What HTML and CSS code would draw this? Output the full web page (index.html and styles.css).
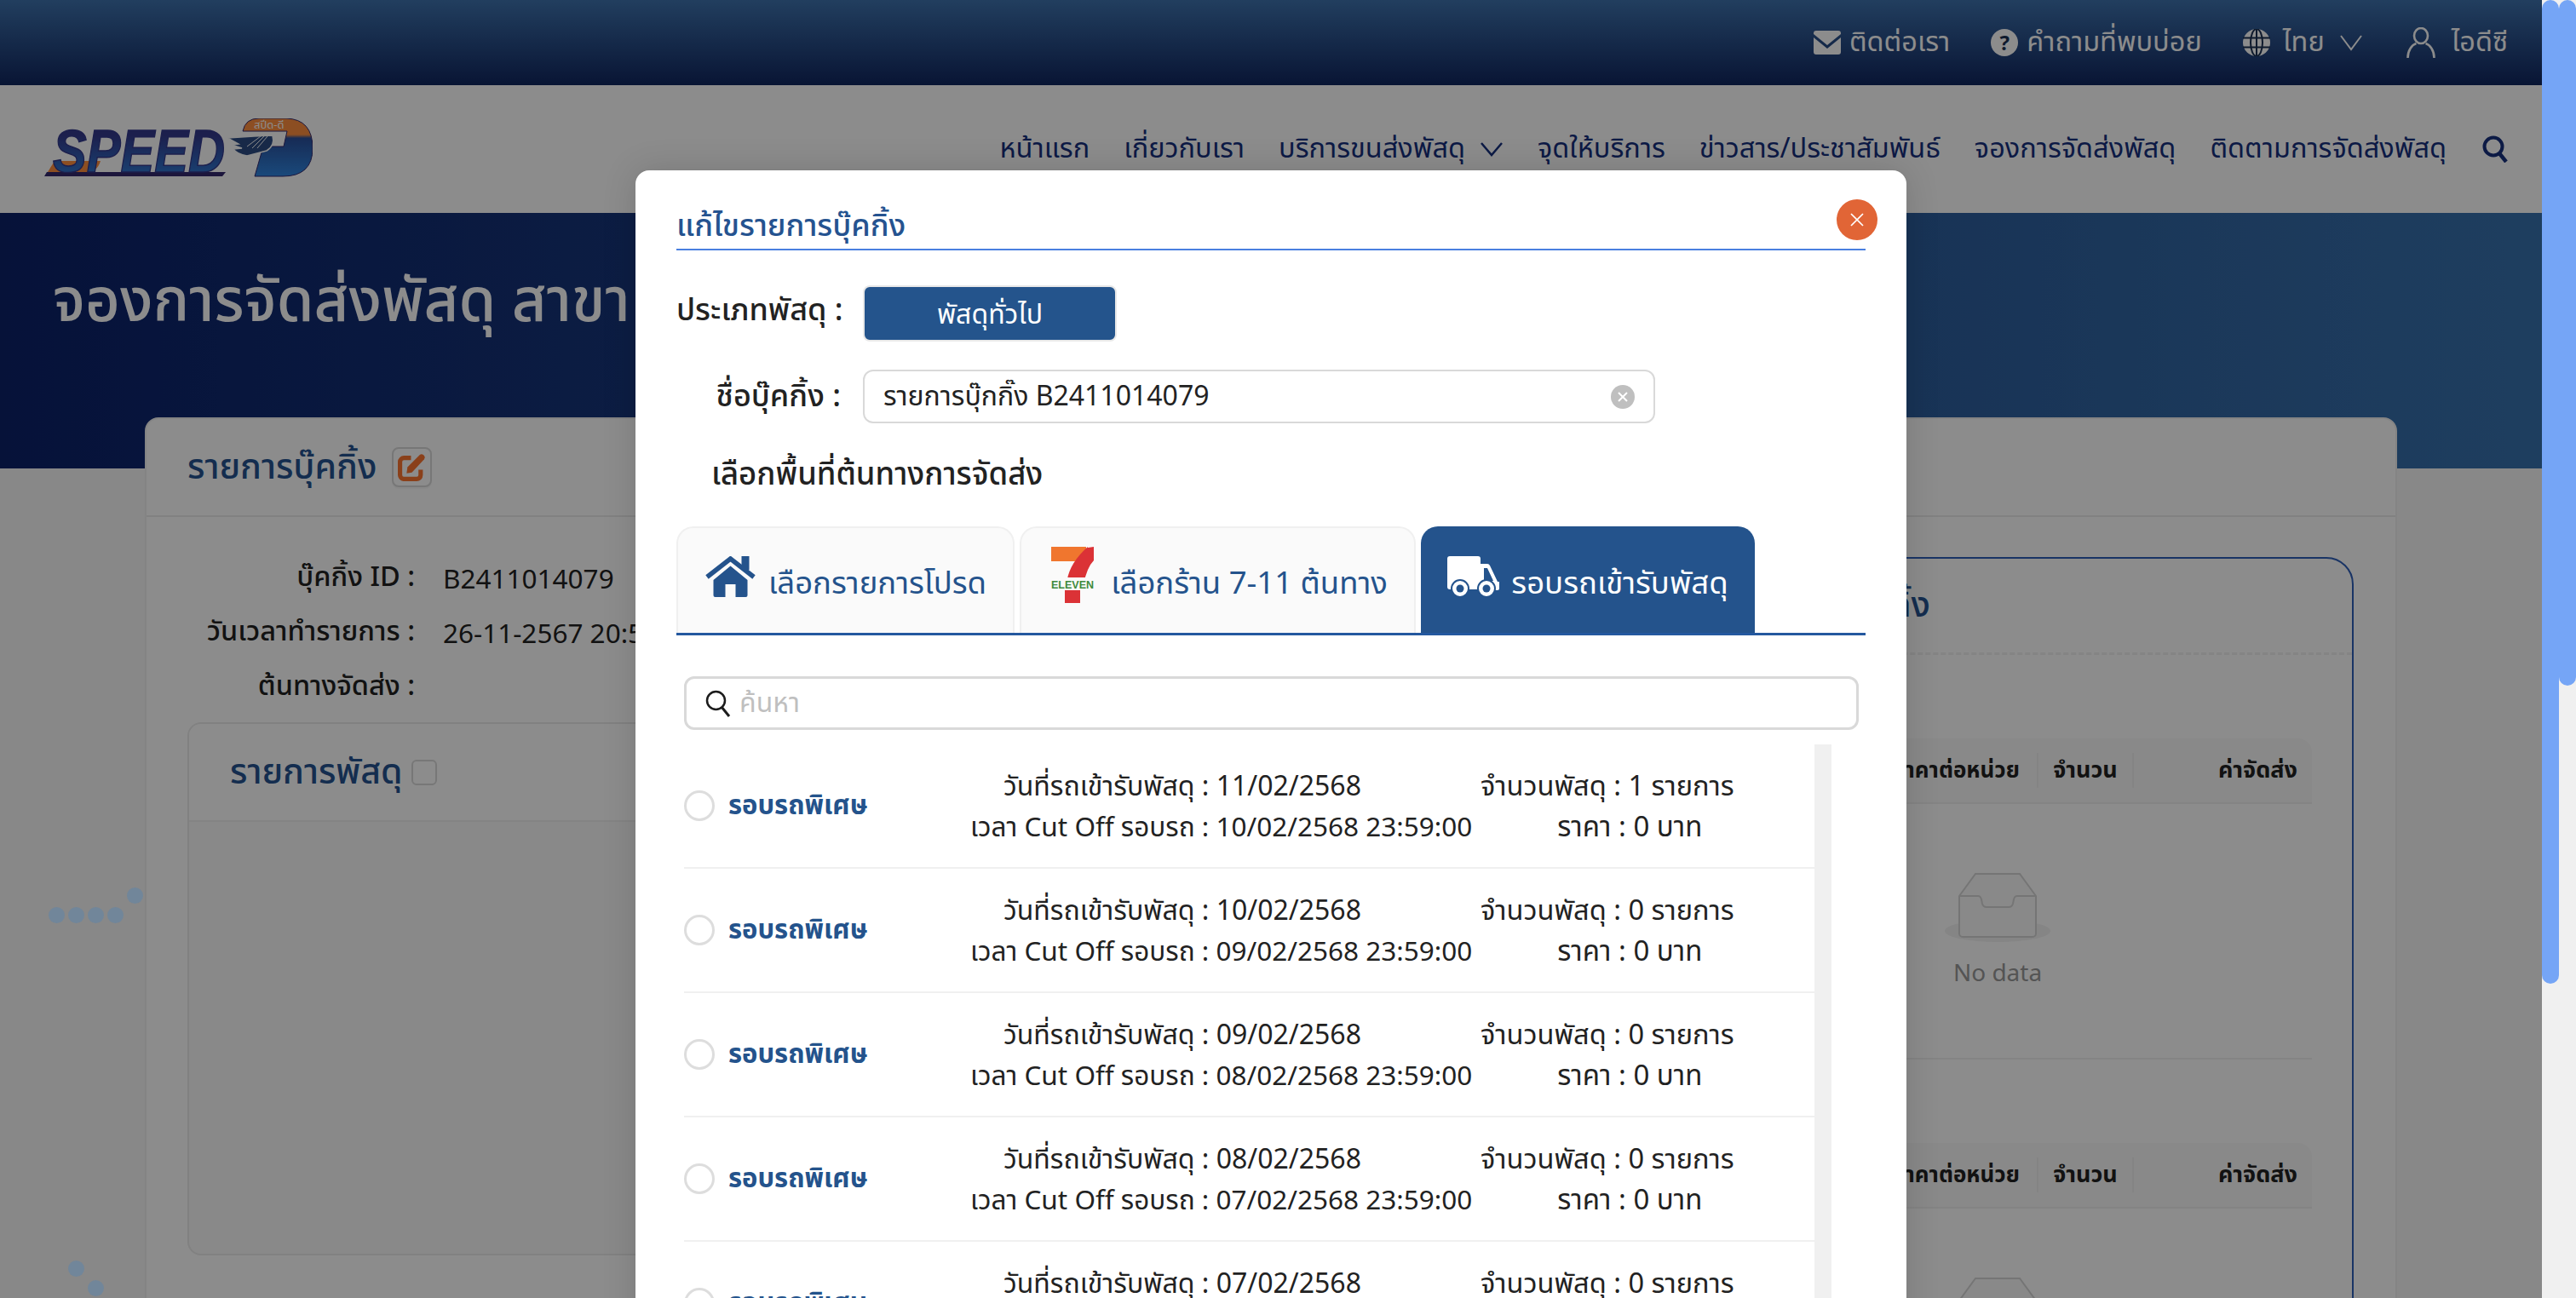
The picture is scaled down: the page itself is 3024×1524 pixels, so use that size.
FILE: index.html
```html
<!DOCTYPE html>
<html lang="th">
<head>
  <meta charset="UTF-8">
  <meta name="viewport" content="width=device-width, initial-scale=1.0">
  <title>จองการจัดส่งพัสดุ</title>
  <link rel="stylesheet" href="styles.css">
</head>
<body>
<div class="viewport">

  <!-- top bar -->
  <div class="topbar">
    <a class="top-link">
      <svg class="top-icon" viewBox="0 0 32 28"><path fill="currentColor" d="M3 0h26a3 3 0 0 1 3 3v1L16 17 0 4V3a3 3 0 0 1 3-3zM0 8l16 13L32 8v17a3 3 0 0 1-3 3H3a3 3 0 0 1-3-3z"/></svg>
      ติดต่อเรา
    </a>
    <a class="top-link">
      <span class="help-dot">?</span>
      คำถามที่พบบ่อย
    </a>
    <a class="top-link top-lang">
      <svg class="top-icon" viewBox="0 0 32 32"><circle cx="16" cy="16" r="16" fill="currentColor"/><g fill="none" stroke="#1a3052" stroke-width="2"><ellipse cx="16" cy="16" rx="7" ry="16"/><path d="M0 10.5h32M0 21.5h32M16 0v32"/></g></svg>
      ไทย
      <svg class="top-chev" viewBox="0 0 28 20"><path d="M2 2l12 16L26 2" fill="none" stroke="currentColor" stroke-width="2"/></svg>
    </a>
    <a class="top-link top-user">
      <svg class="user-icon" viewBox="0 0 34 36"><g fill="none" stroke="currentColor" stroke-width="2.6"><ellipse cx="17" cy="10" rx="8" ry="9"/><path d="M1.5 36c0-9 5-15.500 10-17M32.500 36c0-9-5-15.500-10-17"/></g></svg>
      ไอดีซี
    </a>
  </div>

  <!-- main menu -->
  <div class="navbar">
    <svg class="logo" viewBox="51 137 316 69">
      <defs>
        <linearGradient id="logoBlue" x1="0" y1="0" x2="0" y2="1">
          <stop offset="0.25" stop-color="#33398c"/>
          <stop offset="1" stop-color="#2f86e0"/>
        </linearGradient>
        <linearGradient id="logoD" x1="0" y1="0" x2="0" y2="1">
          <stop offset="0.28" stop-color="#ff8f3e"/>
          <stop offset="0.34" stop-color="#2a4f9c"/>
          <stop offset="1" stop-color="#2f86e0"/>
        </linearGradient>
      </defs>
      <path d="M52 205l3-5h210l-4 5z" fill="#33296e"/>
      <path d="M56 200l8-13h54q-4 13-16 13z" fill="#ff8f3e"/>
      <text class="logo-word" x="62" y="200" textLength="202" lengthAdjust="spacingAndGlyphs" fill="url(#logoBlue)">SPEED</text>
      <path d="M285 152q3-15 19-15h32q31 1 31 35 0 33-35 33h-33l10-35h24l4-18z" fill="url(#logoD)" stroke="#33296e" stroke-width="1"/>
      <text class="logo-thai" x="298" y="149">สปีด-ดี</text>
      <path d="M267 160l31-2 22-1q3 12-7 18l-23 6q-12-2-16-8l10-1-12-4 8-1z" fill="#2c4b84" stroke="#fff" stroke-width="1.500"/>
      <path d="M290 170l16-12M296 172l14-14M302 172l12-14" stroke="#fff" fill="none"/>
    </svg>
    <nav class="menu">
      <a>หน้าแรก</a>
      <a>เกี่ยวกับเรา</a>
      <a class="menu-drop">บริการขนส่งพัสดุ
        <svg class="menu-chev" viewBox="0 0 28 20"><path d="M2 3l12 14L26 3" fill="none" stroke="currentColor" stroke-width="2.500"/></svg>
      </a>
      <a>จุดให้บริการ</a>
      <a>ข่าวสาร/ประชาสัมพันธ์</a>
      <a>จองการจัดส่งพัสดุ</a>
      <a>ติดตามการจัดส่งพัสดุ</a>
      <svg class="menu-search" viewBox="0 0 30 32"><circle cx="13" cy="13" r="10.500" fill="none" stroke="currentColor" stroke-width="4"/><path d="M20 21l8 10" stroke="currentColor" stroke-width="4.500"/></svg>
    </nav>
  </div>

  <div class="hero">
    <h1>จองการจัดส่งพัสดุ สาขาเซ็นทรัล</h1>
  </div>

  <!-- booking panel, mostly behind the modal -->
  <div class="panel">
    <div class="panel-head">
      <span class="panel-title">รายการบุ๊คกิ้ง</span>
      <span class="edit-btn">
        <svg viewBox="0 0 32 32"><path d="M26 19v6a4.500 4.500 0 0 1-4.500 4.500h-15A4.500 4.500 0 0 1 2.500 25V10a4.500 4.500 0 0 1 4.500-4.500h8" fill="none" stroke="#fb7530" stroke-width="5"/><path d="M10 23l1-7L25 2a3 3 0 0 1 4 0l1 1a3 3 0 0 1 0 4L16 22z" fill="#fb7530"/></svg>
      </span>
    </div>
    <div class="panel-body">
      <div class="left-col">
        <div class="info-row"><span class="info-label">บุ๊คกิ้ง ID :</span><span class="info-value">B2411014079</span></div>
        <div class="info-row"><span class="info-label">วันเวลาทำรายการ :</span><span class="info-value">26-11-2567 20:59:14</span></div>
        <div class="info-row"><span class="info-label">ต้นทางจัดส่ง :</span><span class="info-value"></span></div>
        <div class="parcel-card">
          <div class="parcel-head">รายการพัสดุ <span class="check"></span></div>
        </div>
      </div>
      <div class="right-card">
        <div class="right-head">รายการบุ๊คกิ้ง</div>
        <div class="table-head">
          <span class="th-name">ชื่อรายการ</span>
          <span class="th-unit">ราคาต่อหน่วย</span>
          <span class="th-qty">จำนวน</span>
          <span class="th-fee">ค่าจัดส่ง</span>
        </div>
        <div class="empty">
          <svg class="empty-icon" viewBox="0 0 128 82"><ellipse cx="64" cy="68" rx="62" ry="13" fill="#f2f2f2"/><path d="M19 27L38 1h52l19 26v44a4 4 0 0 1-4 4H23a4 4 0 0 1-4-4z" fill="#fafafa" stroke="#d6d6d6" stroke-width="2"/><path d="M19 27h22q3 0 4 4l1 5q1 4 5 4h26q4 0 5-4l1-5q1-4 4-4h22" fill="none" stroke="#d6d6d6" stroke-width="2"/></svg>
          <div class="empty-text">No data</div>
        </div>
        <div class="table-head table-head-2">
          <span class="th-name">ชื่อรายการ</span>
          <span class="th-unit">ราคาต่อหน่วย</span>
          <span class="th-qty">จำนวน</span>
          <span class="th-fee">ค่าจัดส่ง</span>
        </div>
        <div class="empty">
          <svg class="empty-icon" viewBox="0 0 128 82"><ellipse cx="64" cy="68" rx="62" ry="13" fill="#f2f2f2"/><path d="M19 27L38 1h52l19 26v44a4 4 0 0 1-4 4H23a4 4 0 0 1-4-4z" fill="#fafafa" stroke="#d6d6d6" stroke-width="2"/></svg>
        </div>
      </div>
    </div>
  </div>

  <div class="overlay"></div>

  <span class="dot dot-a"></span>
  <span class="dot dot-b"></span>
  <span class="dot dot-c"></span>
  <span class="dot dot-d"></span>
  <span class="dot dot-e"></span>
  <span class="dot dot-f"></span>
  <span class="dot dot-g"></span>

  <!-- edit booking modal -->
  <div class="modal">
    <div class="modal-title">แก้ไขรายการบุ๊คกิ้ง</div>
    <button class="close-btn">
      <svg viewBox="0 0 20 20"><path d="M3 3l14 14M17 3L3 17" stroke="#fff" stroke-width="1.700"/></svg>
    </button>

    <div class="form-row form-type">
      <label class="form-label">ประเภทพัสดุ :</label>
      <span class="type-btn">พัสดุทั่วไป</span>
    </div>
    <div class="form-row form-name">
      <label class="form-label">ชื่อบุ๊คกิ้ง :</label>
      <div class="name-input">
        <span>รายการบุ๊กกิ๊ง B2411014079</span>
        <span class="clear-btn"><svg viewBox="0 0 28 28"><path d="M9 9l10 10M19 9L9 19" stroke="#fff" stroke-width="2"/></svg></span>
      </div>
    </div>
    <div class="area-title">เลือกพื้นที่ต้นทางการจัดส่ง</div>

    <div class="tabs">
      <div class="tab tab-home">
        <svg class="tab-icon" viewBox="0 0 60 48"><path d="M2.500 24.500L30 3l27.500 21.500" fill="none" stroke="#24538c" stroke-width="5.500"/><rect x="43" y="0" width="9" height="16" fill="#24538c"/><path d="M10 28L30 11.500 50 28v18a2 2 0 0 1-2 2H36V33H24v15H12a2 2 0 0 1-2-2z" fill="#24538c"/></svg>
        เลือกรายการโปรด
      </div>
      <div class="tab tab-seven">
        <svg class="seven-icon" viewBox="0 0 50 66">
          <rect x="0" y="0" width="41" height="17" fill="#f0762e"/>
          <path d="M43 1l7-1v16q-8 8-12 28H18q2-24 25-44z" fill="#db3236"/>
          <rect x="16" y="43" width="18" height="23" fill="#db3236"/>
          <rect x="0" y="36" width="50" height="15" fill="#fafafa"/>
          <text class="seven-text" x="0" y="49" textLength="50" lengthAdjust="spacingAndGlyphs">ELEVEN</text>
        </svg>
        เลือกร้าน 7-11 ต้นทาง
      </div>
      <div class="tab tab-active">
        <svg class="tab-icon" viewBox="0 0 61 48"><path d="M3 0h33a3 3 0 0 1 3 3v36H3a3 3 0 0 1-3-3V3a3 3 0 0 1 3-3z" fill="#fff"/><path d="M39 9h8q2 0 3 2l9 19h2v8a2 2 0 0 1-2 2H39z" fill="#fff"/><path d="M43 14h4l7 15H43z" fill="#24538c"/><g fill="#fff" stroke="#24538c" stroke-width="2"><circle cx="15" cy="38" r="10"/><circle cx="46" cy="38" r="10"/></g><circle cx="15" cy="38" r="4.500" fill="#24538c"/><circle cx="46" cy="38" r="4.500" fill="#24538c"/></svg>
        รอบรถเข้ารับพัสดุ
      </div>
    </div>

    <div class="search-box">
      <svg class="search-icon" viewBox="0 0 30 32"><circle cx="12.500" cy="12.500" r="10.500" fill="none" stroke="#1c1c1c" stroke-width="2.500"/><path d="M19 20l9 11" stroke="#1c1c1c" stroke-width="3"/></svg>
      <span>ค้นหา</span>
    </div>

    <div class="round-list">
      <div class="round-rows">
        <div class="round">
          <span class="radio"></span><span class="round-name">รอบรถพิเศษ</span>
          <div class="round-info">
            <div class="round-line"><span class="round-date">วันที่รถเข้ารับพัสดุ : 11/02/2568</span><span class="round-qty">จำนวนพัสดุ : 1 รายการ</span></div>
            <div class="round-line"><span class="round-cut">เวลา Cut Off รอบรถ : 10/02/2568 23:59:00</span><span class="round-price">ราคา : 0 บาท</span></div>
          </div>
        </div>
        <div class="round">
          <span class="radio"></span><span class="round-name">รอบรถพิเศษ</span>
          <div class="round-info">
            <div class="round-line"><span class="round-date">วันที่รถเข้ารับพัสดุ : 10/02/2568</span><span class="round-qty">จำนวนพัสดุ : 0 รายการ</span></div>
            <div class="round-line"><span class="round-cut">เวลา Cut Off รอบรถ : 09/02/2568 23:59:00</span><span class="round-price">ราคา : 0 บาท</span></div>
          </div>
        </div>
        <div class="round">
          <span class="radio"></span><span class="round-name">รอบรถพิเศษ</span>
          <div class="round-info">
            <div class="round-line"><span class="round-date">วันที่รถเข้ารับพัสดุ : 09/02/2568</span><span class="round-qty">จำนวนพัสดุ : 0 รายการ</span></div>
            <div class="round-line"><span class="round-cut">เวลา Cut Off รอบรถ : 08/02/2568 23:59:00</span><span class="round-price">ราคา : 0 บาท</span></div>
          </div>
        </div>
        <div class="round">
          <span class="radio"></span><span class="round-name">รอบรถพิเศษ</span>
          <div class="round-info">
            <div class="round-line"><span class="round-date">วันที่รถเข้ารับพัสดุ : 08/02/2568</span><span class="round-qty">จำนวนพัสดุ : 0 รายการ</span></div>
            <div class="round-line"><span class="round-cut">เวลา Cut Off รอบรถ : 07/02/2568 23:59:00</span><span class="round-price">ราคา : 0 บาท</span></div>
          </div>
        </div>
        <div class="round">
          <span class="radio"></span><span class="round-name">รอบรถพิเศษ</span>
          <div class="round-info">
            <div class="round-line"><span class="round-date">วันที่รถเข้ารับพัสดุ : 07/02/2568</span><span class="round-qty">จำนวนพัสดุ : 0 รายการ</span></div>
            <div class="round-line"><span class="round-cut">เวลา Cut Off รอบรถ : 06/02/2568 23:59:00</span><span class="round-price">ราคา : 0 บาท</span></div>
          </div>
        </div>
      </div>
      <div class="list-track"></div>
    </div>
  </div>
</div>

<!-- window and page scrollbars -->
<div class="scrollbar"><div class="thumb thumb-long"></div></div>
<div class="scrollbar"><div class="thumb thumb-short"></div></div>
</body>
</html>
```

FILE: styles.css
```css
* {
  box-sizing: border-box;
}
html, body {
  margin: 0;
  height: 1524px;
  overflow: hidden;
}
body {
  display: flex;
  font-family: "Noto Sans", "Noto Sans Thai", "Liberation Sans", sans-serif;
  font-size: 32px;
  color: #222;
  background: #f8f8f8;
}
.viewport {
  position: relative;
  width: 2984px;
  height: 1524px;
  overflow: hidden;
  background: #f8f8f8;
}
.scrollbar {
  width: 20px;
  height: 1524px;
  background: #f0f0f0;
}
.thumb {
  width: 20px;
  background: #75a5f6;
  border-radius: 10px;
}
.thumb-long {
  height: 1155px;
}
.thumb-short {
  height: 805px;
}

/* top bar */
.topbar {
  height: 100px;
  padding-right: 40px;
  display: flex;
  justify-content: flex-end;
  align-items: center;
  gap: 48px;
  color: #fff;
  font-size: 32.5px;
  background: linear-gradient(#3e72ad, #10265f);
}
.top-link {
  display: flex;
  align-items: center;
  gap: 10px;
}
.top-lang {
  gap: 15px;
}
.top-user {
  margin-left: 3px;
  gap: 19px;
}
.top-icon {
  width: 32px;
  height: 32px;
}
.top-chev {
  width: 28px;
  height: 20px;
  margin-left: 2px;
}
.user-icon {
  width: 34px;
  height: 36px;
}
.help-dot {
  width: 32px;
  height: 32px;
  border-radius: 50%;
  background: #fff;
  color: #1a3052;
  font-size: 24px;
  font-weight: 700;
  line-height: 32px;
  text-align: center;
}

/* menu */
.navbar {
  height: 150px;
  padding: 0 40px 0 51px;
  display: flex;
  align-items: center;
  justify-content: space-between;
  background: #fff;
}
.logo {
  width: 316px;
  height: 69px;
  margin-top: -3px;
}
.logo-word {
  font-family: "Liberation Sans", sans-serif;
  font-weight: 700;
  font-style: italic;
  font-size: 70px;
  stroke: #33398c;
  stroke-width: 1.5;
}
.logo-thai {
  font-size: 13px;
  fill: #fff;
}
.menu {
  display: flex;
  align-items: center;
  gap: 40px;
  font-size: 32.5px;
  color: #16307e;
}
.menu-drop {
  display: flex;
  align-items: center;
  gap: 17px;
}
.menu-chev {
  width: 28px;
  height: 20px;
}
.menu-search {
  width: 30px;
  height: 32px;
  margin-left: 2px;
}

.hero {
  height: 300px;
  padding: 52px 62px;
  background: linear-gradient(90deg, #0b2169, #3872ae);
}
.hero h1 {
  margin: 0;
  color: #fff;
  font-size: 70.5px;
  font-weight: 500;
  white-space: nowrap;
}

/* booking panel */
.panel {
  margin: -60px 170px 0;
  height: 1100px;
  background: #fff;
  border: 2px solid #f0f0f0;
  border-radius: 16px 16px 0 0;
}
.panel-head {
  height: 115px;
  padding-left: 48px;
  display: flex;
  align-items: center;
  gap: 18px;
  border-bottom: 2px solid #ebebeb;
}
.panel-title {
  font-size: 41px;
  font-weight: 500;
  color: #255390;
}
.edit-btn {
  width: 47px;
  height: 47px;
  padding: 5px;
  border: 2px solid #d9d9d9;
  border-radius: 8px;
  background: #fff;
  box-shadow: 0 2px 0 rgba(0,0,0,.03);
}
.edit-btn svg {
  display: block;
  width: 100%;
  height: 100%;
}
.panel-body {
  padding: 47px 49px 0 48px;
  display: grid;
  grid-template-columns: 1000px 1fr;
  gap: 40px;
}
.info-row {
  height: 64px;
  display: flex;
  align-items: center;
  gap: 33px;
  white-space: nowrap;
}
.left-col {
  margin-top: -8px;
}
.info-label {
  width: 267px;
  text-align: right;
  font-size: 32.5px;
  font-weight: 500;
}
.info-value {
  font-size: 31.5px;
}
.parcel-card {
  margin-top: 10px;
  height: 626px;
  background: #f9f9f9;
  border: 2px solid #ebebeb;
  border-radius: 16px;
  overflow: hidden;
}
.parcel-head {
  height: 115px;
  padding-left: 48px;
  display: flex;
  align-items: center;
  gap: 10px;
  font-size: 41px;
  font-weight: 500;
  color: #255390;
  background: #fff;
  border-bottom: 2px solid #f0f0f0;
}
.check {
  width: 30px;
  height: 30px;
  border: 2px solid #d9d9d9;
  border-radius: 6px;
  background: #fff;
}
.right-card {
  height: 1000px;
  border: 2px solid #2f5fb8;
  border-radius: 32px 32px 0 0;
  padding: 0 47px;
  position: relative;
}
.right-head {
  height: 113px;
  margin: 0 -47px;
  padding-left: 48px;
  display: flex;
  align-items: center;
  justify-content: flex-end;
  padding-right: 495px;
  font-size: 41px;
  font-weight: 500;
  color: #255390;
  border-bottom: 3px dashed #f0f0f0;
}
.table-head {
  margin-top: 98px;
  height: 77px;
  display: grid;
  grid-template-columns: 1fr 168px 114px 209px;
  align-items: center;
  background: #fafafa;
  border-bottom: 2px solid #f0f0f0;
  border-radius: 16px 16px 0 0;
  font-size: 27px;
  font-weight: 700;
  color: #222;
  white-space: nowrap;
}
.th-name {
  padding-left: 24px;
}
.th-unit {
  text-align: right;
  padding-right: 24px;
  font-size: 26px;
}
.th-qty {
  text-align: center;
  border-left: 2px solid #f0f0f0;
  border-right: 2px solid #f0f0f0;
}
.th-fee {
  text-align: right;
  padding-right: 17px;
}
.empty {
  height: 300px;
  padding-top: 81px;
  border-bottom: 2px solid #f0f0f0;
}
.empty-icon {
  display: block;
  width: 128px;
  height: 82px;
  margin-left: 972px;
}
.empty-text {
  margin-left: 972px;
  width: 128px;
  margin-top: 15px;
  text-align: center;
  font-size: 28px;
  color: #999;
}

.overlay {
  position: absolute;
  inset: 0;
  background: rgba(0,0,0,.45);
}

/* floating dots over the backdrop */
.dot {
  position: absolute;
  width: 19px;
  height: 19px;
  border-radius: 50%;
  background: #71869a;
}
.dot-a { left: 57px; top: 1065px; }
.dot-b { left: 80px; top: 1065px; }
.dot-c { left: 103px; top: 1065px; }
.dot-d { left: 126px; top: 1065px; }
.dot-e { left: 149px; top: 1042px; }
.dot-f { left: 80px; top: 1480px; }
.dot-g { left: 103px; top: 1503px; }

/* modal */
.modal {
  position: absolute;
  left: 746px;
  top: 200px;
  width: 1492px;
  height: 1500px;
  padding: 0 48px;
  background: #fff;
  border-radius: 16px 16px 0 0;
  box-shadow: 0 0 40px rgba(0,0,0,.14);
}
.modal-title {
  height: 94px;
  padding-top: 42px;
  font-size: 36px;
  line-height: 44px;
  font-weight: 500;
  color: #255390;
  border-bottom: 2px solid #4a7fe0;
}
.close-btn {
  position: absolute;
  top: 34px;
  right: 34px;
  width: 48px;
  height: 48px;
  padding: 14px;
  border: 0;
  border-radius: 50%;
  background: #e16536;
}
.close-btn svg {
  display: block;
}
.form-row {
  display: flex;
  align-items: center;
  gap: 26px;
}
.form-type {
  margin-top: 41px;
}
.form-type .form-label {
  margin-bottom: 6px;
}
.form-name {
  margin-top: 33px;
}
.form-label {
  width: 193px;
  text-align: right;
  font-size: 36px;
  font-weight: 500;
  white-space: nowrap;
}
.type-btn {
  width: 298px;
  height: 66px;
  line-height: 62px;
  text-align: center;
  color: #fff;
  font-size: 32px;
  background: #24548c;
  border: 2px solid #e8e8e8;
  border-radius: 8px;
}
.name-input {
  width: 930px;
  height: 63px;
  padding: 0 22px;
  display: flex;
  align-items: center;
  justify-content: space-between;
  border: 2px solid #d9d9d9;
  border-radius: 12px;
}
.clear-btn {
  width: 28px;
  height: 28px;
  border-radius: 50%;
  background: #bfbfbf;
}
.clear-btn svg {
  display: block;
}
.area-title {
  height: 121px;
  padding: 33px 0 0 41px;
  font-size: 36.5px;
  font-weight: 500;
}
.tabs {
  height: 128px;
  display: flex;
  align-items: flex-end;
  gap: 6px;
  border-bottom: 3px solid #24589f;
}
.tab {
  height: 125px;
  padding-top: 7px;
  display: flex;
  align-items: center;
  justify-content: center;
  gap: 14px;
  color: #24538c;
  font-size: 36.5px;
  background: #fafafa;
  border: 2px solid #f0f0f0;
  border-bottom: 0;
  border-radius: 20px 20px 0 0;
}
.tab-home {
  width: 397px;
}
.tab-seven {
  width: 465px;
  padding-left: 4px;
  gap: 20px;
}
.tab-active {
  width: 392px;
  color: #fff;
  background: #24538c;
  border-color: #24538c;
}
.tab-icon {
  width: 61px;
  height: 48px;
  margin-bottom: 16px;
}
.seven-icon {
  width: 50px;
  height: 66px;
  margin-bottom: 21px;
}
.seven-text {
  font-family: "Liberation Sans", sans-serif;
  font-size: 13px;
  font-weight: 700;
  fill: #3f8a3c;
}
.search-box {
  margin: 48px 8px 0 9px;
  height: 63px;
  padding: 0 22px;
  display: flex;
  align-items: center;
  gap: 10px;
  color: #bfbfbf;
  font-size: 32px;
  border: 3px solid #d9d9d9;
  border-radius: 12px;
}
.search-icon {
  width: 30px;
  height: 32px;
}
.round-list {
  margin: 17px 40px 0 9px;
  display: flex;
}
.round-rows {
  flex: 1;
}
.list-track {
  width: 20px;
  background: #f0f0f0;
}
.round {
  height: 146px;
  display: flex;
  align-items: center;
  border-bottom: 2px solid #f0f0f0;
}
.radio {
  width: 36px;
  height: 36px;
  border: 3px solid #ddd;
  border-radius: 50%;
}
.round-name {
  width: 300px;
  padding-left: 16px;
  font-size: 31px;
  color: #24538c;
  font-weight: 700;
  white-space: nowrap;
}
.round-line {
  display: flex;
  height: 48px;
  line-height: 48px;
  white-space: nowrap;
}
.round-date {
  margin-left: 39px;
}
.round-cut {
  font-size: 31.5px;
}
.round-qty {
  margin-left: 140px;
  font-size: 32.6px;
}
.round-price {
  margin-left: 100px;
  font-size: 33px;
}
```
